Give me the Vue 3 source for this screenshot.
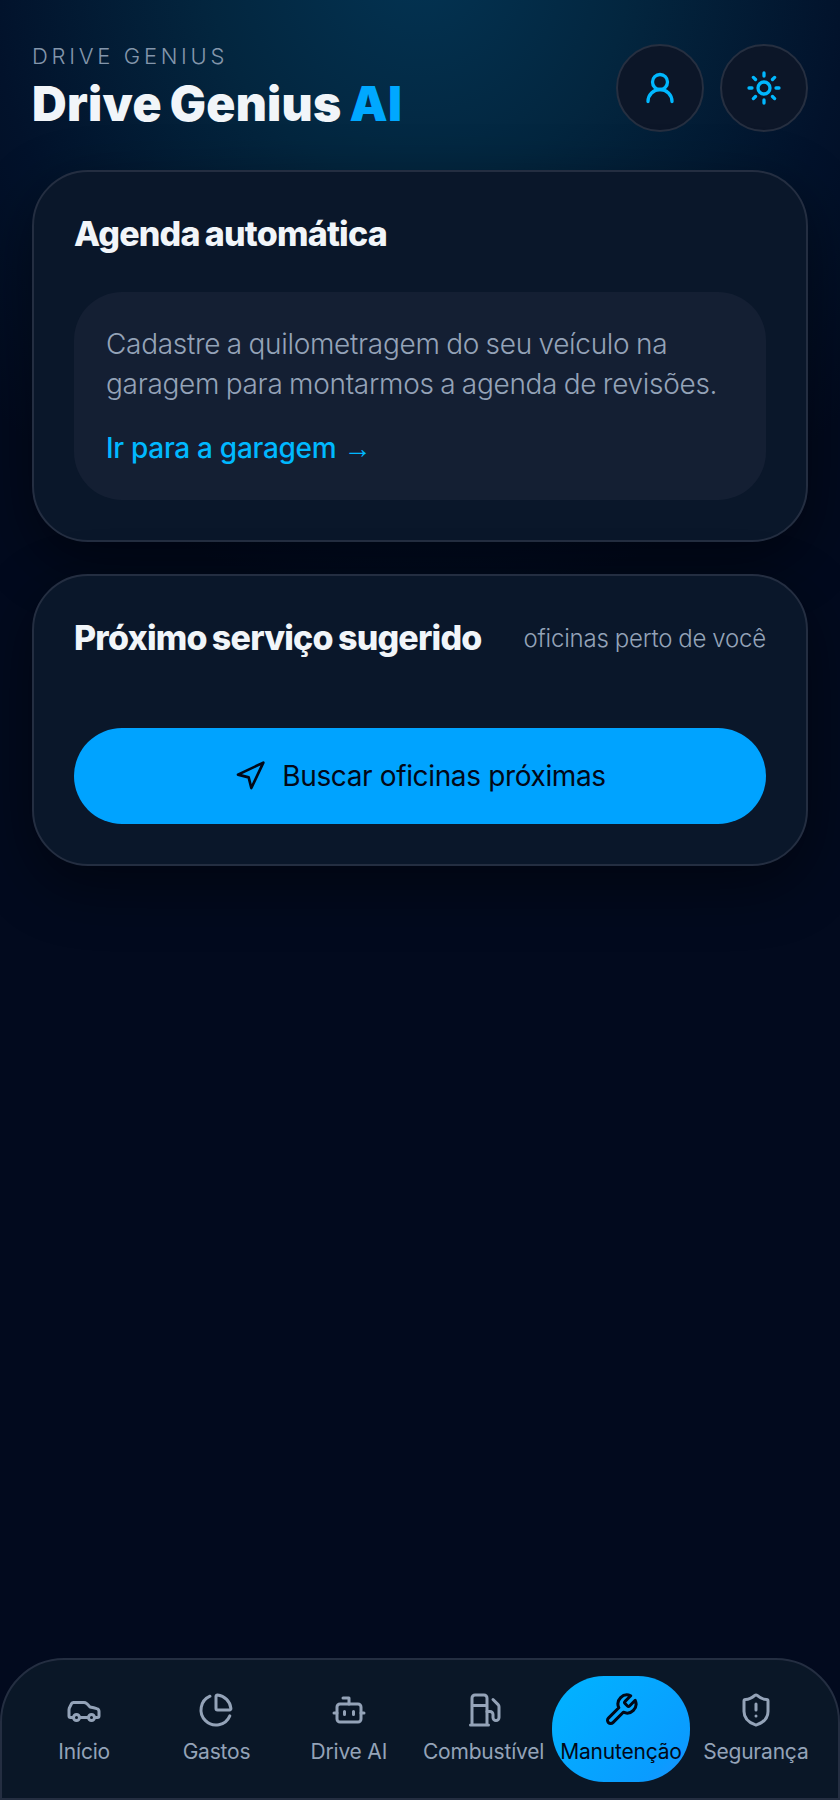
<script setup>
const navItems = [
  { label: 'Início', icon: 'car' },
  { label: 'Gastos', icon: 'pie' },
  { label: 'Drive AI', icon: 'bot' },
  { label: 'Combustível', icon: 'fuel' },
  { label: 'Manutenção', icon: 'wrench', active: true },
  { label: 'Segurança', icon: 'shield' }
]
</script>

<template>
  <div class="screen">
    <main class="content">
      <header class="top">
        <div class="brand">
          <div class="eyebrow">DRIVE GENIUS</div>
          <h1 class="title">Drive Genius <span class="accent">AI</span></h1>
        </div>
        <div class="top-actions">
          <button class="round-btn" aria-label="Perfil">
            <svg class="icon" viewBox="0 0 24 24">
              <circle cx="12" cy="8" r="5" />
              <path d="M20 21a8 8 0 0 0-16 0" />
            </svg>
          </button>
          <button class="round-btn" aria-label="Tema">
            <svg class="icon" viewBox="0 0 24 24">
              <circle cx="12" cy="12" r="4" />
              <path d="M12 2v2M12 20v2M4.93 4.93l1.41 1.41M17.66 17.66l1.41 1.41M2 12h2M20 12h2M6.34 17.66l-1.41 1.41M19.07 4.93l-1.41 1.41" />
            </svg>
          </button>
        </div>
      </header>

      <section class="card">
        <div class="card-head">
          <h2 class="card-title">Agenda automática</h2>
        </div>
        <div class="notice">
          <p class="notice-text">Cadastre a quilometragem do seu veículo na garagem para montarmos a agenda de revisões.</p>
          <a class="notice-link">Ir para a garagem <span class="arrow">→</span></a>
        </div>
      </section>

      <section class="card">
        <div class="card-head">
          <h2 class="card-title">Próximo serviço sugerido</h2>
          <span class="card-hint">oficinas perto de você</span>
        </div>
        <button class="search-btn">
          <svg class="search-icon" viewBox="0 0 24 24">
            <polygon points="3 11 22 2 13 21 11 13 3 11" />
          </svg>
          <span>Buscar oficinas próximas</span>
        </button>
      </section>
    </main>

    <nav class="nav">
      <div v-for="item in navItems" :key="item.label" class="nav-item" :class="{ active: item.active }">
        <svg class="nav-icon" viewBox="0 0 24 24">
          <template v-if="item.icon === 'car'">
            <path d="M19 17h2c.6 0 1-.4 1-1v-3c0-.9-.7-1.7-1.5-1.9C18.7 10.6 16 10 16 10s-1.3-1.4-2.2-2.3c-.5-.4-1.1-.7-1.8-.7H5c-.6 0-1.1.4-1.4.9l-1.4 2.9A3.7 3.7 0 0 0 2 12v4c0 .6.4 1 1 1h2" />
            <circle cx="7" cy="17" r="2" />
            <path d="M9 17h6" />
            <circle cx="17" cy="17" r="2" />
          </template>
          <template v-else-if="item.icon === 'pie'">
            <path d="M21 12c.552 0 1.005-.449.95-.998a10 10 0 0 0-8.953-8.951c-.55-.055-.998.398-.998.95v8a1 1 0 0 0 1 1z" />
            <path d="M21.21 15.89A10 10 0 1 1 8 2.83" />
          </template>
          <template v-else-if="item.icon === 'bot'">
            <path d="M12 8V4H8" />
            <rect width="16" height="12" x="4" y="8" rx="2" />
            <path d="M2 14h2M20 14h2M15 13v2M9 13v2" />
          </template>
          <template v-else-if="item.icon === 'fuel'">
            <path d="M3 22h12M4 9h10M14 22V4a2 2 0 0 0-2-2H6a2 2 0 0 0-2 2v18" />
            <path d="M14 13h2a2 2 0 0 1 2 2v2a2 2 0 0 0 2 2a2 2 0 0 0 2-2V9.83a2 2 0 0 0-.59-1.42L18 5" />
          </template>
          <template v-else-if="item.icon === 'wrench'">
            <path d="M14.7 6.3a1 1 0 0 0 0 1.4l1.6 1.6a1 1 0 0 0 1.4 0l3.77-3.77a6 6 0 0 1-7.94 7.94l-6.91 6.91a2.12 2.12 0 0 1-3-3l6.91-6.91a6 6 0 0 1 7.94-7.94l-3.76 3.76z" />
          </template>
          <template v-else>
            <path d="M20 13c0 5-3.5 7.5-7.66 8.95a1 1 0 0 1-.67-.01C7.5 20.5 4 18 4 13V6a1 1 0 0 1 1-1c2 0 4.5-1.2 6.24-2.72a1.17 1.17 0 0 1 1.52 0C14.51 3.81 17 5 19 5a1 1 0 0 1 1 1z" />
            <path d="M12 8v4M12 16h.01" />
          </template>
        </svg>
        <span class="nav-label">{{ item.label }}</span>
      </div>
    </nav>
  </div>
</template>

<style>
html, body {
  margin: 0;
  background: #020a1e;
}
</style>

<style scoped>
.screen {
  width: 840px;
  height: 1800px;
  display: flex;
  flex-direction: column;
  font-family: Inter, "Noto Sans", sans-serif;
  color: #f1f5f9;
  background: radial-gradient(ellipse 600px 640px at 50% -40px, #033352 0%, #03263f 35%, #02122b 72%, #020a1e 100%), #020a1e;
}

.content {
  flex: 1;
  padding: 44px 32px 0;
  display: flex;
  flex-direction: column;
  gap: 32px;
}

.top {
  display: flex;
  justify-content: space-between;
  margin-bottom: 6px;
}

.eyebrow {
  font-size: 22px;
  line-height: 24px;
  letter-spacing: 3.7px;
  font-weight: 300;
  color: #8496ab;
}

.title {
  margin: 8px 0 0;
  font-size: 48px;
  line-height: 56px;
  font-weight: 900;
  letter-spacing: 0.3px;
  word-spacing: -2px;
}

.accent {
  color: #00a8ff;
}

.top-actions {
  display: flex;
  gap: 16px;
}

.round-btn {
  width: 88px;
  height: 88px;
  border-radius: 50%;
  border: 2px solid #262f40;
  background: #0c1628;
  display: flex;
  align-items: center;
  justify-content: center;
  padding: 0;
}

.icon {
  width: 36px;
  height: 36px;
  fill: none;
  stroke: #00b8ff;
  stroke-width: 2.2;
  stroke-linecap: round;
  stroke-linejoin: round;
}

.card {
  padding: 40px;
  border: 2px solid #242e41;
  border-radius: 56px;
  background: #0a172a;
  box-shadow: 0 20px 60px rgba(0, 0, 0, 0.45);
}

.card-head {
  display: flex;
  justify-content: space-between;
  align-items: center;
  margin-bottom: 36px;
}

.card-title {
  margin: 0;
  font-size: 34px;
  line-height: 44px;
  font-weight: 800;
  letter-spacing: -0.8px;
  word-spacing: -1.5px;
}

.card-hint {
  font-size: 24px;
  font-weight: 300;
  letter-spacing: -0.2px;
  word-spacing: -0.5px;
  color: #94a3b8;
}

.notice {
  padding: 32px;
  border-radius: 48px;
  background: #141f33;
}

.notice-text {
  margin: 0 0 24px;
  font-size: 28px;
  line-height: 40px;
  font-weight: 300;
  letter-spacing: -0.3px;
  word-spacing: -1px;
  color: #94a3b8;
}

.notice-link {
  display: block;
  font-size: 28px;
  line-height: 40px;
  font-weight: 500;
  letter-spacing: -0.3px;
  color: #00b8ff;
}

.arrow {
  font-family: "Liberation Sans", sans-serif;
  font-weight: 400;
  line-height: 0;
}

.search-btn {
  width: 100%;
  height: 96px;
  margin-top: 68px;
  border: 0;
  border-radius: 48px;
  background: #00a3ff;
  color: #020817;
  font: inherit;
  font-size: 28px;
  letter-spacing: -0.36px;
  display: flex;
  align-items: center;
  justify-content: center;
  gap: 16px;
}

.search-icon {
  width: 32px;
  height: 32px;
  fill: none;
  stroke: #020817;
  stroke-width: 2;
  stroke-linecap: round;
  stroke-linejoin: round;
}

.nav {
  box-sizing: border-box;
  height: 142px;
  padding: 16px;
  display: flex;
  border: 2px solid #242e41;
  border-radius: 64px 64px 0 0;
  background: #0a1727;
}

.nav-item {
  flex: 1;
  padding: 16px 8px 13px;
  display: flex;
  flex-direction: column;
  align-items: center;
  gap: 7px;
  border-radius: 52px;
  color: #94a3b8;
}

.nav-item.active {
  background: linear-gradient(135deg, #00b4ff, #0a9cff 80%, #1f90ff);
  color: #020817;
}

.nav-icon {
  width: 36px;
  height: 36px;
  fill: none;
  stroke: currentColor;
  stroke-width: 2;
  stroke-linecap: round;
  stroke-linejoin: round;
}

.nav-label {
  font-size: 21px;
  line-height: 34px;
  letter-spacing: -0.2px;
  white-space: nowrap;
}
</style>
